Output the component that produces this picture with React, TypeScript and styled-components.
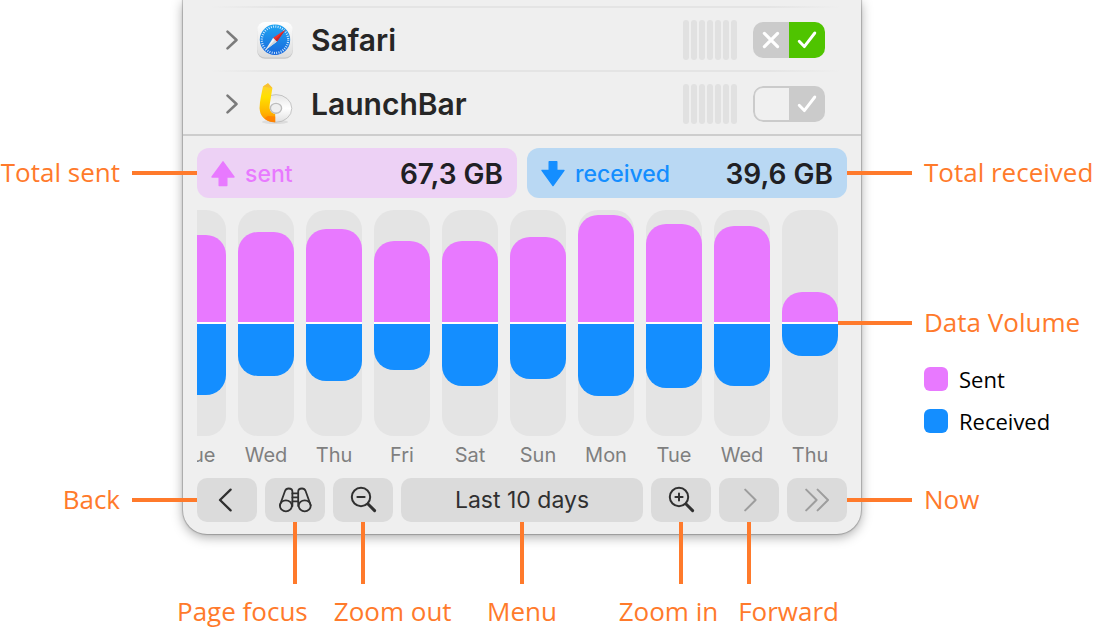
import React from "react";
import styled, { createGlobalStyle } from "styled-components";

const ORANGE = "#ff7a2b";
const PINK = "#e879ff";
const BLUE = "#148eff";
const UI_FONT = `Inter, "Liberation Sans", sans-serif`;

const GlobalStyle = createGlobalStyle`
  * { box-sizing: border-box; }
  body {
    margin: 0;
    background: #fff;
    font-family: "Open Sans", "Noto Sans", sans-serif;
  }
  button, select { font: inherit; border: 0; padding: 0; margin: 0; }
`;

const Page = styled.main`
  display: grid;
  grid-template-columns: 183px minmax(560px, 1fr) 232px;
  grid-template-rows: repeat(4, auto) 1fr;
  row-gap: 12px;
  min-height: 100vh;
  overflow: hidden;
`;

const Panel = styled.section`
  grid-column: 2;
  grid-row: 1 / 5;
  display: grid;
  grid-template-rows: subgrid;
  padding-bottom: 12px;
  background: #efefef;
  border-radius: 0 0 24px 24px;
  box-shadow: 0 0 1px 1px rgba(0, 0, 0, 0.22), 0 3px 12px rgba(0, 0, 0, 0.34);
  font-family: ${UI_FONT};
`;

const AppList = styled.ul`
  list-style: none;
  margin: 0;
  padding: 8px 0 0;
  box-shadow: inset 0 -2px #cdcdcd;
  background: linear-gradient(90deg, #efefef 4%, #e4e4e4 14%, #e4e4e4 86%, #efefef 97%) 0 6px / 100% 2px no-repeat;
`;

const AppRow = styled.li<{ $divided?: boolean }>`
  display: flex;
  align-items: center;
  height: 64px;
  padding: 0 36px 0 42px;
  ${(p) =>
    p.$divided &&
    "background: linear-gradient(90deg, #efefef 4%, #e4e4e4 14%, #e4e4e4 86%, #efefef 97%) 0 100% / 100% 2px no-repeat;"}
`;

const Disclosure = styled.button`
  display: flex;
  width: 14px;
  margin-right: 18px;
  background: none;
`;

const AppName = styled.span`
  flex: 1;
  margin-left: 18px;
  font-size: 30px;
  line-height: 36px;
  font-weight: 600;
  color: #262626;
`;

const Meter = styled.div`
  display: flex;
  gap: 2px;
  height: 40px;
  margin-right: 16px;
`;

const MeterBar = styled.i`
  width: 6px;
  border-radius: 3px;
  background: #e1e1e1;
`;

const Toggle = styled.div`
  display: flex;
  height: 36px;
  border-radius: 10px;
  overflow: hidden;
`;

const ToggleHalf = styled.button<{ $tone: "green" | "gray" | "empty" }>`
  display: flex;
  width: 36px;
  height: 36px;
  background: ${(p) => (p.$tone === "green" ? "#4fc400" : p.$tone === "gray" ? "#cbcbcb" : "#f0f0f0")};
  ${(p) =>
    p.$tone === "empty" && "border: 2px solid #cbcbcb; border-right: 0; border-radius: 10px 0 0 10px;"}
`;

const Totals = styled.div`
  display: grid;
  grid-template-columns: 1fr 1fr;
  gap: 10px;
  padding: 0 14px;
`;

const Total = styled.div<{ $tint: string; $color: string }>`
  display: flex;
  align-items: center;
  gap: 10px;
  height: 50px;
  padding: 2px 14px 0;
  border-radius: 12px;
  background: ${(p) => p.$tint};
  color: ${(p) => p.$color};
  font-size: 23px;
  line-height: 30px;
  font-weight: 500;
`;

const TotalValue = styled.strong`
  margin-left: auto;
  font-size: 28px;
  font-weight: 600;
  color: #202024;
`;

const Chart = styled.div`
  display: flex;
  justify-content: flex-end;
  gap: 12px;
  margin: 0 14px;
  padding-right: 9px;
  overflow: hidden;
`;

const Day = styled.div`
  flex: 0 0 56px;
  text-align: center;
  font-size: 20px;
  line-height: 22px;
  color: #7f7f7f;
`;

const Track = styled.div`
  display: grid;
  grid-template-rows: 112px 112px;
  gap: 2px;
  margin-bottom: 8px;
  border-radius: 20px;
  background: linear-gradient(#fff, #fff) 0 50% / 100% 2px no-repeat #e4e4e4;
`;

const Bar = styled.div<{ $kind: "sent" | "received" }>`
  align-self: ${(p) => (p.$kind === "sent" ? "end" : "start")};
  border-radius: ${(p) => (p.$kind === "sent" ? "20px 20px 0 0" : "0 0 20px 20px")};
  background: ${(p) => (p.$kind === "sent" ? PINK : BLUE)};
`;

const toolbarGrid = `
  display: grid;
  grid-template-columns: 60px 60px 60px minmax(0, 1fr) 60px 60px 60px;
  gap: 8px;
`;

const Toolbar = styled.div`
  ${toolbarGrid}
  padding: 0 14px;
`;

const ToolButton = styled.button`
  display: flex;
  align-items: center;
  justify-content: center;
  height: 44px;
  border-radius: 10px;
  background: #dbdbdb;
  color: #303030;
  &:disabled { color: #9d9d9d; }
`;

const PeriodSelect = styled.select`
  appearance: none;
  height: 44px;
  border-radius: 10px;
  background: #dbdbdb;
  color: #303030;
  font-size: 23px;
  font-weight: 400;
  text-align: center;
  text-align-last: center;
`;

const Callout = styled.div<{ $side: "left" | "right"; $row: number }>`
  grid-column: ${(p) => (p.$side === "left" ? 1 : 3)};
  grid-row: ${(p) => p.$row};
  display: flex;
  flex-direction: ${(p) => (p.$side === "left" ? "row" : "row-reverse")};
  align-items: center;
  justify-content: flex-end;
  gap: 12px;
  align-self: start;
  height: ${(p) => (p.$row === 2 ? 50 : 44)}px;
  z-index: 1;
`;

const Label = styled.span`
  font-size: 26px;
  line-height: 30px;
  font-weight: 400;
  color: ${ORANGE};
  white-space: nowrap;
  ${Callout} & { padding-bottom: 2px; }
`;

const Leader = styled.i<{ $side: "left" | "right"; $reach?: number }>`
  flex: none;
  height: 4px;
  width: ${(p) => 51 + (p.$reach ?? 14)}px;
  margin-${(p) => (p.$side === "left" ? "right" : "left")}: -${(p) => p.$reach ?? 14}px;
  background: ${ORANGE};
`;

const ChartNotes = styled.div`
  grid-column: 3;
  grid-row: 3;
  padding-top: 91px;
  z-index: 1;
`;

const Legend = styled.ul`
  list-style: none;
  display: grid;
  gap: 18px;
  margin: 22px 0 0;
  padding: 0 0 0 63px;
`;

const LegendItem = styled.li<{ $color: string }>`
  display: flex;
  align-items: center;
  gap: 11px;
  font-size: 22px;
  line-height: 24px;
  font-weight: 400;
  color: #000;
  &::before {
    content: "";
    width: 24px;
    height: 24px;
    border-radius: 6px;
    background: ${(p) => p.$color};
  }
`;

const BottomNotes = styled.div`
  grid-column: 2;
  grid-row: 5;
  margin-top: -24px;
  z-index: 1;
`;

const Drops = styled.div`
  ${toolbarGrid}
  padding: 0 14px;
  justify-items: center;
`;

const Drop = styled.i<{ $col: number }>`
  grid-column: ${(p) => p.$col};
  width: 4px;
  height: 62px;
  background: ${ORANGE};
`;

const BottomLabels = styled.div`
  display: grid;
  grid-template-columns: 1fr auto 1fr;
  margin: 12px -6px 0;
`;

const LabelPair = styled.div<{ $end?: boolean }>`
  display: flex;
  gap: ${(p) => (p.$end ? 20 : 26)}px;
  justify-content: ${(p) => (p.$end ? "flex-end" : "flex-start")};
  padding-right: ${(p) => (p.$end ? 28 : 0)}px;
`;

const Icon = ({ children }: { children: React.ReactNode }) => (
  <svg width="36" height="36" viewBox="0 0 36 36" fill="none" stroke="currentColor" strokeWidth="2" strokeLinecap="round" strokeLinejoin="round" aria-hidden="true">
    {children}
  </svg>
);

const Chevron = () => (
  <svg width="14" height="22" viewBox="0 0 14 22" fill="none" stroke="#7b7b7b" strokeWidth="2.6" strokeLinecap="round" strokeLinejoin="round" aria-hidden="true">
    <path d="M2.5 2.6 11.5 11l-9 8.4" />
  </svg>
);

const Check = () => (
  <svg width="36" height="36" viewBox="0 0 36 36" fill="none" stroke="#fff" strokeWidth="2.9" strokeLinecap="round" strokeLinejoin="round" aria-hidden="true">
    <path d="M10.2 19.2 15.3 24.6 25.8 11" />
  </svg>
);

const Cross = () => (
  <svg width="36" height="36" viewBox="0 0 36 36" fill="none" stroke="#fff" strokeWidth="3.2" strokeLinecap="round" aria-hidden="true">
    <path d="M11.4 11.4 24.6 24.6M24.6 11.4 11.4 24.6" />
  </svg>
);

const SafariIcon = () => (
  <svg width="36" height="40" viewBox="0 0 36 40" aria-hidden="true">
    <defs>
      <linearGradient id="safari-plate" x1="0" y1="0" x2="0" y2="1">
        <stop offset="0" stopColor="#fff" />
        <stop offset="1" stopColor="#dcdcdc" />
      </linearGradient>
      <linearGradient id="safari-dial" x1="0" y1="0" x2="0" y2="1">
        <stop offset="0" stopColor="#1fa5f2" />
        <stop offset="1" stopColor="#1868dc" />
      </linearGradient>
    </defs>
    <rect x="0.2" y="3.4" width="35.6" height="35.4" rx="8" fill="#c6c6c6" />
    <rect x="0.2" y="2" width="35.6" height="35.6" rx="8" fill="url(#safari-plate)" />
    <circle cx="18" cy="19.8" r="15.2" fill="url(#safari-dial)" />
    <circle cx="18" cy="19.8" r="13.2" fill="none" stroke="#d8ecff" strokeWidth="2.2" strokeDasharray="0.9 1.404" />
    <path d="M8.2 30.2 16.2 17.8 20 21.6z" fill="#f4f4f4" />
    <path d="M28.6 9.4 16.2 17.8 20 21.6z" fill="#f0342c" />
    <path d="M8.2 30.2 20 21.6 18.1 19.7z" fill="#cfd4da" />
    <path d="M28.6 9.4 20 21.6 18.1 19.7z" fill="#c9252a" />
  </svg>
);

const LaunchBarIcon = () => (
  <svg width="36" height="44" viewBox="0 0 36 44" aria-hidden="true">
    <defs>
      <linearGradient id="lb-stem" x1="0" y1="0" x2="0" y2="1">
        <stop offset="0" stopColor="#ffcf3a" />
        <stop offset="0.35" stopColor="#ffe000" />
        <stop offset="0.75" stopColor="#ffb400" />
        <stop offset="1" stopColor="#ff8a00" />
      </linearGradient>
      <linearGradient id="lb-bowl" x1="0" y1="0" x2="0" y2="1">
        <stop offset="0" stopColor="#e6e6e6" />
        <stop offset="0.5" stopColor="#ffffff" />
        <stop offset="1" stopColor="#e0e0e0" />
      </linearGradient>
    </defs>
    <ellipse cx="18" cy="40" rx="13" ry="2" fill="#dcdcdc" />
    <ellipse cx="19" cy="26.4" rx="15.8" ry="13.8" fill="url(#lb-bowl)" stroke="#b9b9b9" strokeWidth="0.8" />
    <path d="M11 1.2 15.4 6 12.8 22C12 28 13.6 31 18.2 31.8V40.2C9 40.4 2.4 34.4 2.6 25.6 2.8 18 4.6 11.4 6 4.4z" fill="url(#lb-stem)" />
    <path d="M11 1.2 15.4 6 11.2 5.4 6 4.4z" fill="#f8c034" />
    <path d="M7.4 36.4 10.8 34 18.2 34.4V40.2C13.6 40.4 10 38.8 7.4 36.4z" fill="#ff7f00" opacity="0.8" />
    <ellipse cx="19" cy="26.3" rx="5.6" ry="4.9" fill="#efefef" stroke="#bdbdbd" strokeWidth="1.4" />
  </svg>
);

const Arrow = ({ down }: { down?: boolean }) => (
  <svg width="24" height="26" viewBox="0 0 24 26" fill="currentColor" stroke="currentColor" strokeWidth="1.4" strokeLinejoin="round" aria-hidden="true">
    {down ? (
      <path d="M12 24.6 1 9.4H8.2V.8h7.6v8.6H23z" />
    ) : (
      <path d="M12 .8 23 16H15.8v8.6H8.2V16H1z" />
    )}
  </svg>
);

const apps = [
  { name: "Safari", icon: <SafariIcon />, allowed: true },
  { name: "LaunchBar", icon: <LaunchBarIcon />, allowed: false },
];

const days = [
  { day: "Tue", sent: 87, received: 71 },
  { day: "Wed", sent: 90, received: 52 },
  { day: "Thu", sent: 93, received: 57 },
  { day: "Fri", sent: 81, received: 46 },
  { day: "Sat", sent: 81, received: 62 },
  { day: "Sun", sent: 85, received: 55 },
  { day: "Mon", sent: 107, received: 72 },
  { day: "Tue", sent: 98, received: 64 },
  { day: "Wed", sent: 96, received: 62 },
  { day: "Thu", sent: 30, received: 32 },
];

export default function App() {
  return (
    <>
      <GlobalStyle />
      <Page>
        <Panel>
          <AppList>
            {apps.map((app, i) => (
              <AppRow key={app.name} $divided={i < apps.length - 1}>
                <Disclosure aria-label={`Expand ${app.name}`}>
                  <Chevron />
                </Disclosure>
                {app.icon}
                <AppName>{app.name}</AppName>
                <Meter>
                  {Array.from({ length: 7 }, (_, n) => (
                    <MeterBar key={n} />
                  ))}
                </Meter>
                <Toggle>
                  <ToggleHalf $tone={app.allowed ? "gray" : "empty"} aria-label={`Deny ${app.name}`}>
                    {app.allowed && <Cross />}
                  </ToggleHalf>
                  <ToggleHalf $tone={app.allowed ? "green" : "gray"} aria-label={`Allow ${app.name}`}>
                    <Check />
                  </ToggleHalf>
                </Toggle>
              </AppRow>
            ))}
          </AppList>

          <Totals>
            <Total $tint="#edd1f5" $color={PINK}>
              <Arrow />
              <span>sent</span>
              <TotalValue>67,3 GB</TotalValue>
            </Total>
            <Total $tint="#b9d8f3" $color={BLUE}>
              <Arrow down />
              <span>received</span>
              <TotalValue>39,6 GB</TotalValue>
            </Total>
          </Totals>

          <Chart>
            {days.map((d, i) => (
              <Day key={i}>
                <Track>
                  <Bar $kind="sent" style={{ height: d.sent }} />
                  <Bar $kind="received" style={{ height: d.received }} />
                </Track>
                {d.day}
              </Day>
            ))}
          </Chart>

          <Toolbar>
            <ToolButton aria-label="Back">
              <Icon><path d="M21.6 7.6 11 18l10.6 10.4" strokeWidth="2.3" /></Icon>
            </ToolButton>
            <ToolButton aria-label="Page focus">
              <Icon>
                <g strokeWidth="1.8">
                  <ellipse cx="8.9" cy="23.8" rx="6" ry="5.5" />
                  <ellipse cx="27.7" cy="23.8" rx="6" ry="5.5" />
                  <path d="M2.9 23.2 8 9C8.7 7.2 9.7 6.5 11.6 6.5 14.2 6.5 15.4 7.6 15.4 9.6V24" />
                  <path d="M33.7 23.2 28.6 9C27.9 7.2 26.9 6.5 25 6.5 22.4 6.5 21.2 7.6 21.2 9.6V24" />
                  <path d="M15.4 11.4h5.8M15.4 15.4h5.8M15.4 19.4h5.8" />
                </g>
              </Icon>
            </ToolButton>
            <ToolButton aria-label="Zoom out">
              <Icon>
                <circle cx="16" cy="15" r="9.2" />
                <path d="M12.4 15h7.2" />
                <path d="m23 22 6.6 6.6" strokeWidth="3" />
              </Icon>
            </ToolButton>
            <PeriodSelect aria-label="Period" defaultValue="10">
              <option value="10">Last 10 days</option>
            </PeriodSelect>
            <ToolButton aria-label="Zoom in">
              <Icon>
                <circle cx="16" cy="15" r="9.2" />
                <path d="M12.4 15h7.2M16 11.4v7.2" />
                <path d="m23 22 6.6 6.6" strokeWidth="3" />
              </Icon>
            </ToolButton>
            <ToolButton aria-label="Forward" disabled>
              <Icon><path d="M14.2 7.6 24.6 18 14.2 28.4" /></Icon>
            </ToolButton>
            <ToolButton aria-label="Now" disabled>
              <Icon><path d="M7.2 7.6 17.6 18 7.2 28.4M18.6 7.6 29 18 18.6 28.4" /></Icon>
            </ToolButton>
          </Toolbar>
        </Panel>

        <Callout $side="left" $row={2}>
          <Label>Total sent</Label>
          <Leader $side="left" />
        </Callout>
        <Callout $side="left" $row={4}>
          <Label>Back</Label>
          <Leader $side="left" />
        </Callout>

        <Callout $side="right" $row={2}>
          <Label>Total received</Label>
          <Leader $side="right" />
        </Callout>
        <ChartNotes>
          <Callout $side="right" $row={3}>
            <Label>Data Volume</Label>
            <Leader $side="right" $reach={23} />
          </Callout>
          <Legend>
            <LegendItem $color={PINK}>Sent</LegendItem>
            <LegendItem $color={BLUE}>Received</LegendItem>
          </Legend>
        </ChartNotes>
        <Callout $side="right" $row={4}>
          <Label>Now</Label>
          <Leader $side="right" />
        </Callout>

        <BottomNotes>
          <Drops>
            <Drop $col={2} />
            <Drop $col={3} />
            <Drop $col={4} />
            <Drop $col={5} />
            <Drop $col={6} />
          </Drops>
          <BottomLabels>
            <LabelPair>
              <Label>Page focus</Label>
              <Label>Zoom out</Label>
            </LabelPair>
            <Label>Menu</Label>
            <LabelPair $end>
              <Label>Zoom in</Label>
              <Label>Forward</Label>
            </LabelPair>
          </BottomLabels>
        </BottomNotes>
      </Page>
    </>
  );
}
